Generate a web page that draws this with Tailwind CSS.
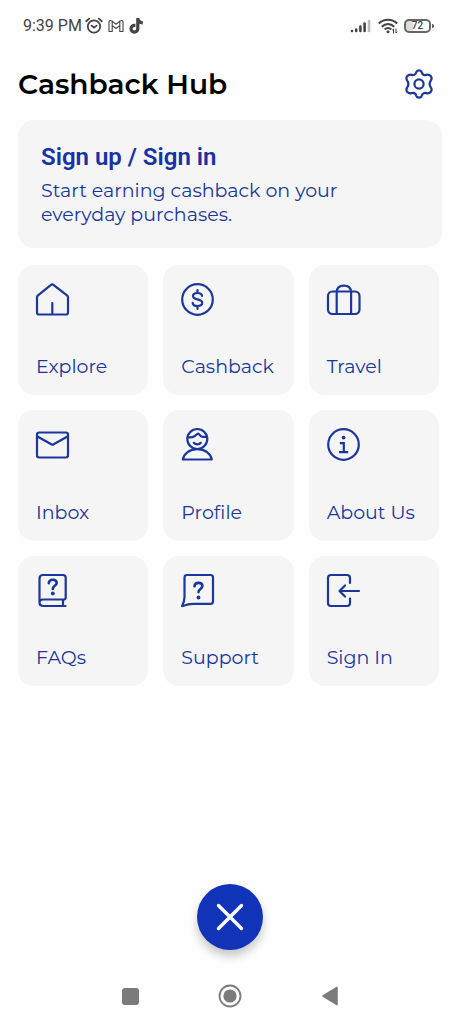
<!DOCTYPE html>
<html lang="en">
<head>
<meta charset="utf-8">
<meta name="viewport" content="width=device-width, initial-scale=1">
<title>Cashback Hub</title>
<script src="https://cdn.jsdelivr.net/npm/@tailwindcss/browser@4"></script>
</head>
<body class="bg-[#fefefe] font-['Montserrat','Inter',sans-serif] text-[#1b369d]">
<div class="flex min-h-screen flex-col">

  <!-- Status bar -->
  <div class="flex h-[52px] items-center justify-between pr-[26px] pl-[23px] text-[#444]">
    <div class="flex items-center gap-[3px]">
      <span class="font-['Roboto',sans-serif] text-base">9:39 PM</span>
      <svg class="h-[18px] w-[18px]" viewBox="0 0 18 18" fill="none" stroke="currentColor" stroke-width="1.8" stroke-linecap="round" aria-hidden="true"><circle cx="9" cy="9.5" r="6.2"/><path d="M1.2 4.2 4.2 1.6M16.8 4.2l-3-2.6M6.600 8.600 9 10.600l2.600-2"/></svg>
      <svg class="ml-0.5 h-[18px] w-[16px]" viewBox="0 0 16 18" fill="none" stroke="currentColor" stroke-width="1.1" stroke-linejoin="round" aria-hidden="true"><path d="M1 14.500V5.200c0-1.700 1.700-2.200 2.800-1.300L8 7.200l4.200-3.300c1.100-.9 2.800-.4 2.800 1.300v9.300h-3.200V8.600L8 11.500 4.200 8.600v5.900zM4.200 8.600V4.200M11.800 8.600V4.200"/></svg>
      <svg class="ml-0.5 h-[18px] w-[16px]" viewBox="0 0 16 18" fill="none" stroke="currentColor" stroke-width="3.200" aria-hidden="true"><path d="M8.800 1v10.800a3.400 3.400 0 1 1-3.400-3.400h1M8.800 1.500c.3 2.700 2.300 4.200 5 4.300"/></svg>
    </div>
    <div class="flex items-center gap-1.5">
      <svg class="h-[14px] w-[22px]" viewBox="0 0 22 14" fill="none" stroke="currentColor" stroke-width="2.600" stroke-linecap="round" aria-hidden="true"><path d="M2 12v0M6.200 12v-1.500M10.400 12V7.500M14.600 12V4.500"/><path stroke="#bbb" d="M19 12V2"/></svg>
      <svg class="h-[16px] w-[20px]" viewBox="0 0 20 16" fill="none" stroke="currentColor" stroke-width="2.100" aria-hidden="true"><path d="M.8 5.500c5.400-5 13-5 18.400 0M3.700 8.700c3.800-3.500 8.800-3.500 12.600 0M6.700 11.500c2-1.800 4.600-1.800 6.600 0"/><circle cx="10" cy="13.800" r="1.500" fill="currentColor" stroke="none"/><path stroke-width="1" d="M15.500 11v4.500M14.200 12.300l1.300-1.300M18 10.500V15M19.300 13.700 18 15"/></svg>
      <div class="flex items-center gap-px">
        <span class="flex h-[14px] w-[27px] items-center justify-center rounded-[5px] border-2 border-[#666] bg-linear-to-r from-[#ddd] from-30% to-[#fefefe] to-30% font-['Roboto',sans-serif] text-[10px] leading-none font-medium">72</span>
        <span class="h-1 w-[2px] rounded-r bg-[#555]"></span>
      </div>
    </div>
  </div>

  <header class="flex h-[68px] items-center justify-between pr-[27px] pb-1 pl-[18px]">
    <h1 class="text-[28px] font-semibold text-black">Cashback Hub</h1>
    <button type="button" aria-label="Settings">
      <svg class="h-[30px] w-[28px]" viewBox="0 0 28 30" fill="none" stroke="currentColor" stroke-width="2.200" stroke-linejoin="round" aria-hidden="true"><path d="M11.300 3.200c.8-2.500 4.600-2.500 5.400 0 .6 2.200 2.500 3.300 4.700 2.700 3.300-.9 6.600 2.300 4.500 5.400-1.700 2.500-1.700 4.900 0 7.400 2.100 3.100-1.200 6.300-4.500 5.400-2.200-.6-4.100.5-4.700 2.700-.8 2.500-4.600 2.500-5.400 0-.6-2.200-2.500-3.300-4.700-2.700-3.300.9-6.600-2.300-4.500-5.400 1.700-2.500 1.700-4.900 0-7.400C0 8.200 3.300 5 6.600 5.900c2.200.6 4.100-.5 4.700-2.700z"/><circle cx="14" cy="15" r="4.600"/></svg>
    </button>
  </header>

  <main>
    <a href="#signin" class="mx-[18px] block rounded-[16px] bg-[#f5f5f5] px-[23px] pt-[22px] pb-[21px]">
      <h2 class="font-['Roboto',sans-serif] text-[24px] leading-[30px] font-semibold text-[#1733a3]">Sign up / Sign in</h2>
      <p class="mt-[7px] text-[19px] leading-[24px]">Start earning cashback on your<br>everyday purchases.</p>
    </a>

    <nav aria-label="Menu" class="mt-[17px] mr-[21px] ml-[18px] grid grid-cols-3 gap-[15px] text-[19px] leading-6 [&_svg]:h-[34px] [&_svg]:w-[34px] [&_svg]:overflow-visible [&_svg]:stroke-[#1b369d] [&>a]:flex [&>a]:aspect-square [&>a]:flex-col [&>a]:justify-between [&>a]:rounded-[16px] [&>a]:bg-[#f5f5f5] [&>a]:px-[18px] [&>a]:pt-[18px] [&>a]:pb-[16px]">
      <a href="#explore">
        <svg viewBox="0 0 34 34" fill="none" stroke-width="2.200" stroke-linecap="round" stroke-linejoin="round" aria-hidden="true"><path d="M15 1.800c.8-.7 1.600-.7 2.400 0L31 12.300c.7.600 1 1.100 1 2v15.200a2 2 0 0 1-2 2H3a2 2 0 0 1-2-2V14.300c0-.9.3-1.400 1-2zM16.300 20v11"/></svg>
        <span>Explore</span></a>
      <a href="#cashback">
        <svg viewBox="0 0 34 34" fill="none" stroke-width="2.200" stroke-linecap="round" aria-hidden="true"><circle cx="16.500" cy="16.500" r="15.300"/><path d="M16.500 7v3M16.500 23v3M21 12.800c-.2-1.800-1.900-2.800-4.500-2.800s-4.500 1.200-4.500 3.100c0 2.200 1.800 2.800 4.500 3.300s4.700 1.200 4.700 3.400c0 2-1.900 3.200-4.700 3.200s-4.600-1.200-4.800-3.200"/></svg>
        <span>Cashback</span></a>
      <a href="#travel">
        <svg viewBox="0 0 34 34" fill="none" stroke-width="2.200" aria-hidden="true"><rect x="1" y="8.500" width="31.500" height="22.500" rx="4.500"/><path d="M9.700 31V9.500C9.700 5 12.500 2.700 16.900 2.700s7.200 2.300 7.200 6.800V31"/></svg>
        <span>Travel</span></a>
      <a href="#inbox">
        <svg viewBox="0 0 34 34" fill="none" stroke-width="2.200" stroke-linejoin="round" aria-hidden="true"><rect x="1" y="4.500" width="31" height="25" rx="2.200"/><path d="m1 8.200 14.300 8.100c.8.500 1.500.5 2.300 0L32 8.200"/></svg>
        <span>Inbox</span></a>
      <a href="#profile">
        <svg viewBox="0 0 34 34" fill="none" stroke-width="2.200" stroke-linecap="round" stroke-linejoin="round" aria-hidden="true"><circle cx="16.300" cy="11" r="10"/><path d="M6.800 9.200c2.700.5 5.200 0 7-1.200 1.200-.8 2.200-2.300 3.300-2.300 1.500 0 1.700 3.200 4.400 3.200h4.300M12.800 14.800c1.600 2 5.400 2 7 0M1.800 31.500c1.200-5.800 6.700-10.300 14.500-10.300s13.300 4.500 14.500 10.300z"/></svg>
        <span>Profile</span></a>
      <a href="#about">
        <svg viewBox="0 0 34 34" fill="none" stroke-width="2.200" aria-hidden="true"><circle cx="16.500" cy="16.500" r="15.300"/><circle cx="16.600" cy="9.600" r="1.900" fill="#1b369d" stroke="none"/><path d="M12.800 15.200h4v9M12 24.200h9.200"/></svg>
        <span class="whitespace-nowrap">About Us</span></a>
      <a href="#faqs">
        <svg viewBox="0 0 34 34" fill="none" stroke-width="2.200" stroke-linecap="round" stroke-linejoin="round" aria-hidden="true"><path d="M29.500 32H7.500C5 32 3.500 30.500 3.500 28.500V4.500C3.500 2.300 4.800 1 7 1h20c1.800 0 2.700.9 2.700 2.700v19.800c0 1.200-.7 2-2 2H7c-2.200 0-3.500 1.200-3.500 3M27 25.500V32"/><path stroke-width="2.600" d="M12.800 9.200c.2-2.300 1.700-3.400 4-3.400s3.900 1.200 3.900 3.200c0 2.900-3.900 2.800-3.900 6"/><circle cx="16.800" cy="19.500" r="1.900" fill="#1b369d" stroke="none"/></svg>
        <span>FAQs</span></a>
      <a href="#support">
        <svg viewBox="0 0 34 34" fill="none" stroke-width="2.200" stroke-linecap="round" stroke-linejoin="round" aria-hidden="true"><path d="M3.500 3.500C3.500 1.800 4.300 1 6 1h23.500C31.200 1 32 1.800 32 3.500v24c0 1.500-.8 2.300-2.500 2.300H12c-4 0-7 1-11 2.400 2-3.500 2.500-6 2.500-9.200z"/><path stroke-width="2.600" d="M13.500 12.300c.2-2.300 1.700-3.400 4-3.400s3.900 1.200 3.900 3.200c0 2.900-3.900 2.800-3.900 6"/><circle cx="17.500" cy="23.500" r="1.900" fill="#1b369d" stroke="none"/></svg>
        <span>Support</span></a>
      <a href="#signin">
        <svg viewBox="0 0 34 34" fill="none" stroke-width="2.200" stroke-linecap="round" stroke-linejoin="round" aria-hidden="true"><path d="M23 9V4c0-2-1-3-3-3H4C2 1 1 2 1 4v25c0 2 1 3 3 3h16c2 0 3-1 3-3v-4.500M32 17H12.800M18 11.500 12.500 17l5.500 5.500"/></svg>
        <span>Sign In</span></a>
    </nav>
  </main>

  <footer class="mt-auto">
    <div class="flex justify-center">
      <button type="button" aria-label="Close menu" class="flex size-[66px] items-center justify-center rounded-full bg-[#1033b8] shadow-[0_6px_10px_rgba(0,0,0,0.22)]">
        <svg class="size-[30px]" viewBox="0 0 30 30" fill="none" stroke="#fff" stroke-width="3.400" stroke-linecap="round" aria-hidden="true"><path d="m3.500 3.500 23 23M26.500 3.500l-23 23"/></svg>
      </button>
    </div>
    <div class="mx-[113px] mt-[29px] mb-[11px] flex h-[34px] items-center justify-between text-[#7b7b7b]">
      <button type="button" aria-label="Recent apps" class="flex size-[34px] items-center justify-center"><span class="size-[17px] rounded-[3px] bg-current"></span></button>
      <button type="button" aria-label="Home" class="flex size-[34px] items-center justify-center"><svg class="size-6" viewBox="0 0 24 24" aria-hidden="true"><circle cx="12" cy="12" r="10.500" fill="none" stroke="currentColor" stroke-width="1.800"/><circle cx="12" cy="12" r="6.600" fill="currentColor"/></svg></button>
      <button type="button" aria-label="Back" class="flex size-[34px] items-center justify-center"><svg class="h-5 w-4" viewBox="0 0 16 20" fill="currentColor" stroke="currentColor" stroke-width="1.500" stroke-linejoin="round" aria-hidden="true"><path d="M1 10 15 1.300v17.400z"/></svg></button>
    </div>
  </footer>
</div>
</body>
</html>
